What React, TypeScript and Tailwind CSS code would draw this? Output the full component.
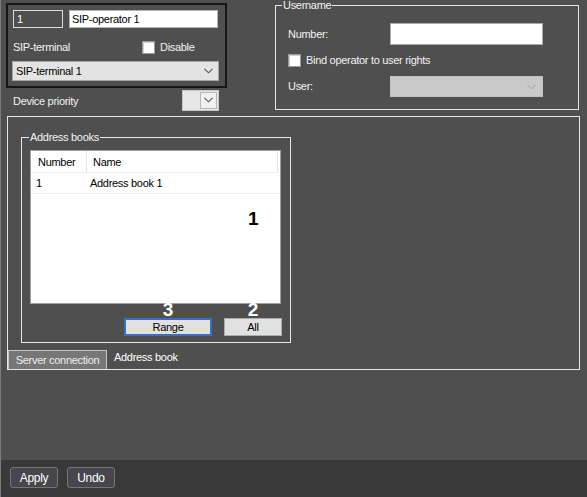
import React from "react";

const font = "font-['Liberation_Sans',Arial,sans-serif] text-[11px] tracking-[-0.3px]";

function Chevron({ color = "#555" }: { color?: string }) {
  return (
    <svg width="9" height="6" viewBox="0 0 9 6" fill="none">
      <path d="M0.5 0.8 L4.5 4.8 L8.5 0.8" stroke={color} strokeWidth="1.1" />
    </svg>
  );
}

function CheckBox() {
  return <span className="inline-block w-[13px] h-[13px] bg-white border border-[#9a9a9a] shadow-[inset_1px_1px_0_#d0d0d0]" />;
}

export default function App() {
  return (
    <div className={`w-[587px] h-[497px] bg-[#4f4f4f] border-l border-[#7c7c7c] flex flex-col text-[#f2f2f2] ${font}`}>
      <div className="flex-1 flex flex-col">
        {/* Top row */}
        <div className="flex items-start h-[110px]">
          <div className="ml-[5px] mt-[3px] w-[221px]">
            <div className="h-[85px] border-2 border-[#161616] p-[5px]">
              <div className="flex gap-[6px]">
                <div className="w-[50px] h-[18px] border border-[#dcdcdc] pl-[3px] leading-[16px] text-white">1</div>
                <div className="w-[149px] h-[18px] bg-white border border-[#b4b4b4] pl-[2px] leading-[16px] text-black">SIP-operator 1</div>
              </div>
              <div className="flex items-center mt-[12px] h-[14px]">
                <span className="w-[129px]">SIP-terminal</span>
                <CheckBox />
                <span className="ml-[5px]">Disable</span>
              </div>
              <div className="-ml-px mt-[7px] w-[207px] h-[20px] bg-[#e3e3e3] border border-[#a5a5a5] flex items-center justify-between pl-[3px] pr-[5px] text-black">
                <span>SIP-terminal 1</span>
                <Chevron />
              </div>
            </div>
            <div className="flex items-center justify-between mt-[1px] h-[22px] pl-[7px] pr-[8px]">
              <span className="mt-[2px]">Device priority</span>
              <div className="w-[37px] h-[21px] bg-[#e6e6e6] border border-[#c8c8c8] flex justify-end p-[1px]">
                <div className="w-[17px] h-full bg-[#f0f0f0] border border-[#b8b8b8] flex items-center justify-center">
                  <Chevron />
                </div>
              </div>
            </div>
          </div>

          <fieldset className="ml-[48px] w-[304px] h-[110px] border border-[#e6e6e6] pl-[12px] pr-[35px]">
            <legend className="ml-[-6px] px-[1px] leading-[11px]">Username</legend>
            <div className="flex items-center justify-between mt-[12px]">
              <span>Number:</span>
              <div className="w-[153px] h-[22px] bg-white border border-[#a9a9a9]" />
            </div>
            <div className="flex items-center mt-[9px] h-[13px]">
              <CheckBox />
              <span className="ml-[5px]">Bind operator to user rights</span>
            </div>
            <div className="flex items-center justify-between mt-[9px]">
              <span>User:</span>
              <div className="w-[153px] h-[21px] bg-[#c9c9c9] border border-[#c1c1c1] flex items-center justify-end pr-[6px]">
                <Chevron color="#a8a8a8" />
              </div>
            </div>
          </fieldset>
        </div>

        {/* Tab panel */}
        <div className="ml-[6px] mt-[6px] w-[573px] h-[254px] border border-[#e6e6e6] flex flex-col">
          <fieldset className="ml-[13px] mt-[14px] w-[270px] h-[212px] border border-[#e6e6e6] px-[8px]">
            <legend className="ml-[-1px] px-[1px] leading-[12px]">Address books</legend>
            <div className="relative mt-[7px] w-[251px] h-[154px] bg-white border border-[#a0a0a0] text-black">
              <div className="flex h-[22px] items-center border-b border-[#f0f0f0] mr-[2px]">
                <span className="w-[56px] h-full pl-[7px] leading-[22px] border-r border-[#e5e5e5]">Number</span>
                <span className="flex-1 h-full pl-[6px] leading-[22px] border-r border-[#e5e5e5]">Name</span>
              </div>
              <div className="flex h-[21px] items-center border-b border-[#ececec]">
                <span className="w-[59px] pl-[5px]">1</span>
                <span>Address book 1</span>
              </div>
              <span className="absolute left-[217px] top-[58px] text-[19px] font-bold leading-none tracking-normal">1</span>
            </div>
            <div className="flex justify-end gap-[12px] mt-[14px]">
              <div className="relative">
                <span className="absolute bottom-full left-1/2 -translate-x-1/2 mb-[1px] text-[19px] font-bold leading-[15px] tracking-normal text-white">3</span>
                <button className="w-[88px] h-[18px] bg-[#e1e1e1] border-2 border-[#2f74c4] text-black leading-[14px]">Range</button>
              </div>
              <div className="relative">
                <span className="absolute bottom-full left-1/2 -translate-x-1/2 mb-[1px] text-[19px] font-bold leading-[15px] tracking-normal text-white">2</span>
                <button className="w-[58px] h-[18px] bg-[#e1e1e1] border border-[#adadad] text-black leading-[16px]">All</button>
              </div>
            </div>
          </fieldset>
          <div className="mt-auto flex items-end">
            <div className="w-[99px] h-[19px] bg-[#777777] border border-b-0 border-[#c4c4c4] flex items-center justify-center text-[#eeeeee]">
              Server connection
            </div>
            <span className="ml-[7px] mb-[4px] text-white">Address book</span>
          </div>
        </div>
      </div>

      {/* Bottom bar */}
      <div className="h-[37px] bg-[#3a393a] flex items-center gap-[9px] pl-[9px] pb-[2px]">
        <button className="w-[48px] h-[21px] bg-[#46464c] border border-[#76767a] rounded-[3px] text-white text-[12px]">Apply</button>
        <button className="w-[48px] h-[21px] bg-[#46464c] border border-[#76767a] rounded-[3px] text-white text-[12px]">Undo</button>
      </div>
    </div>
  );
}
